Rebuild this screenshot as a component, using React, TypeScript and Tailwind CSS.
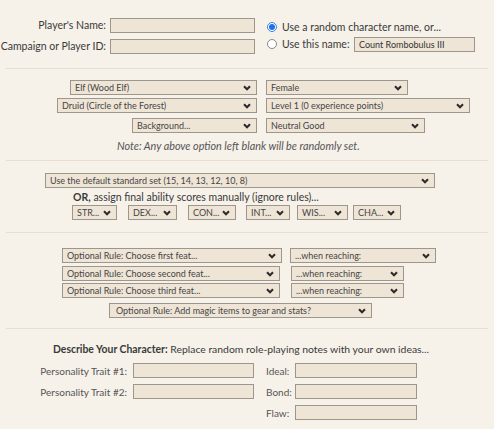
import React from "react";

const font = { fontFamily: "Lato, 'Open Sans', 'Liberation Sans', sans-serif" };

function Chevron() {
  return (
    <svg width="8" height="6" viewBox="0 0 8 6" className="shrink-0">
      <path d="M1 1.2 L4 4.3 L7 1.2" fill="none" stroke="#2b2b2b" strokeWidth="2" />
    </svg>
  );
}

function Sel({ text, className = "" }: { text: string; className?: string }) {
  return (
    <div
      className={`h-[15px] flex items-center justify-between gap-[2px] border border-[#9c968c] bg-[#efe5d7] pl-[4px] pr-[5px] text-[9px] text-[#444] leading-none whitespace-nowrap overflow-hidden ${className}`}
    >
      <span>{text}</span>
      <Chevron />
    </div>
  );
}

function Field({ className = "", value = "" }: { className?: string; value?: string }) {
  return (
    <div
      className={`h-[15px] flex items-center border border-[#9c968c] bg-[#efe5d7] px-[4px] text-[9px] text-[#333] leading-none whitespace-nowrap ${className}`}
    >
      {value}
    </div>
  );
}

function Rule() {
  return <div className="mx-[6px] border-t border-[#e6ded2]" />;
}

export default function App() {
  return (
    <div
      className="w-[494px] h-[429px] overflow-hidden bg-[#f6f1e9] text-[#3a3a3a] text-[10.5px] leading-none whitespace-nowrap"
      style={font}
    >
      {/* Name block */}
      <div className="flex pt-[18px] h-[54px]">
        <div className="flex flex-col gap-[6px]">
          <div className="flex items-center">
            <span className="w-[106px] flex justify-end">Player's Name:</span>
            <Field className="ml-[4px] w-[145px]" />
          </div>
          <div className="flex items-center">
            <span className="w-[106px] flex justify-end">Campaign or Player ID:</span>
            <Field className="ml-[4px] w-[145px]" />
          </div>
        </div>
        <div className="ml-[12px] flex flex-col pt-[3px] gap-[4px]">
          <div className="flex items-center h-[12px]">
            <span className="w-[10px] h-[10px] rounded-full border border-[#3b82d6] bg-white flex items-center justify-center">
              <span className="w-[6px] h-[6px] rounded-full bg-[#1a73e8]" />
            </span>
            <span className="ml-[5px]">Use a random character name, or...</span>
          </div>
          <div className="flex items-center h-[14px]">
            <span className="w-[10px] h-[10px] rounded-full border border-[#8a8a8a] bg-white" />
            <span className="ml-[5px] w-[72px]">Use this name:</span>
            <Field className="w-[121px] h-[14px]" value="Count Rombobulus III" />
          </div>
        </div>
      </div>

      <div className="mt-[14px]">
        <Rule />
      </div>

      {/* Race / class block */}
      <div className="mt-[11px] flex flex-col">
        <div className="flex">
          <div className="w-[257px] flex justify-end">
            <Sel text="Elf (Wood Elf)" className="w-[187px]" />
          </div>
          <Sel text="Female" className="ml-[9px] w-[142px]" />
        </div>
        <div className="flex mt-[3px]">
          <div className="w-[257px] flex justify-end">
            <Sel text="Druid (Circle of the Forest)" className="w-[200px]" />
          </div>
          <Sel text="Level 1 (0 experience points)" className="ml-[9px] w-[204px]" />
        </div>
        <div className="flex mt-[5px]">
          <div className="w-[257px] flex justify-end">
            <Sel text="Background..." className="w-[125px]" />
          </div>
          <Sel text="Neutral Good" className="ml-[9px] w-[159px]" />
        </div>
        <div className="mt-[8px] pl-[117px] italic text-[#555] text-[10.8px] h-[12px]">
          Note: Any above option left blank will be randomly set.
        </div>
      </div>

      <div className="mt-[7px]">
        <Rule />
      </div>

      {/* Ability scores */}
      <div className="mt-[12px] flex flex-col">
        <Sel text="Use the default standard set (15, 14, 13, 12, 10, 8)" className="ml-[45px] w-[390px]" />
        <div className="mt-[4px] pl-[73px] h-[12px]">
          <b className="font-bold">OR,</b> assign final ability scores manually (ignore rules)...
        </div>
        <div className="mt-[1px] flex pl-[72px]">
          <Sel text="STR..." className="w-[45px]" />
          <Sel text="DEX..." className="ml-[11px] w-[49px]" />
          <Sel text="CON..." className="ml-[11px] w-[48px]" />
          <Sel text="INT..." className="ml-[10px] w-[44px]" />
          <Sel text="WIS..." className="ml-[7px] w-[51px]" />
          <Sel text="CHA..." className="ml-[5px] w-[48px]" />
        </div>
      </div>

      <div className="mt-[12px]">
        <Rule />
      </div>

      {/* Feats */}
      <div className="mt-[15px] flex flex-col">
        <div className="flex pl-[62px]">
          <Sel text="Optional Rule: Choose first feat..." className="w-[220px]" />
          <Sel text="...when reaching:" className="ml-[8px] w-[146px]" />
        </div>
        <div className="flex pl-[62px] mt-[3px]">
          <Sel text="Optional Rule: Choose second feat..." className="w-[218px]" />
          <Sel text="...when reaching:" className="ml-[11px] w-[113px]" />
        </div>
        <div className="flex pl-[62px] mt-[2px]">
          <Sel text="Optional Rule: Choose third feat..." className="w-[218px]" />
          <Sel text="...when reaching:" className="ml-[11px] w-[113px]" />
        </div>
        <Sel text="Optional Rule: Add magic items to gear and stats?" className="mt-[5px] ml-[109px] w-[263px] pl-[6px]" />
      </div>

      <div className="mt-[10px]">
        <Rule />
      </div>

      {/* Describe */}
      <div className="mt-[15px] pl-[53px] h-[12px] text-[10.4px]">
        <b className="font-bold">Describe Your Character:</b> Replace random role-playing notes with your own ideas...
      </div>
      <div className="mt-[7px] flex">
        <div className="flex flex-col gap-[6px]">
          <div className="flex items-center">
            <span className="w-[127px] flex justify-end text-[10px] text-[#555]">Personality Trait #1:</span>
            <Field className="ml-[6px] w-[121px]" />
          </div>
          <div className="flex items-center">
            <span className="w-[127px] flex justify-end text-[10px] text-[#555]">Personality Trait #2:</span>
            <Field className="ml-[6px] w-[121px]" />
          </div>
        </div>
        <div className="ml-[12px] flex flex-col gap-[6px]">
          <div className="flex items-center">
            <span className="w-[29px] text-[10px] text-[#555]">Ideal:</span>
            <Field className="w-[122px]" />
          </div>
          <div className="flex items-center">
            <span className="w-[29px] text-[10px] text-[#555]">Bond:</span>
            <Field className="w-[122px]" />
          </div>
          <div className="flex items-center">
            <span className="w-[29px] text-[10px] text-[#555]">Flaw:</span>
            <Field className="w-[122px]" />
          </div>
        </div>
      </div>
    </div>
  );
}
